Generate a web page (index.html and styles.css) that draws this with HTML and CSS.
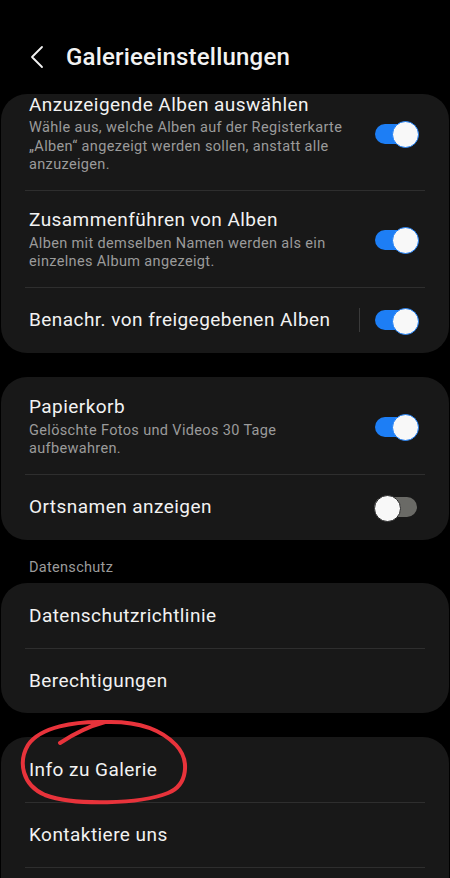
FILE: index.html
```html
<!DOCTYPE html>
<html lang="de">
<head>
  <meta charset="UTF-8"/>
  <meta name="viewport" content="width=device-width, initial-scale=1.0"/>
  <title>Galerieeinstellungen</title>
  <link rel="stylesheet" href="styles.css">
</head>
<body>
<div class="header">
  <svg class="back" width="14" height="24" viewBox="0 0 14 24">
    <path d="M12 2 L2 12 L12 22" fill="none" stroke="#f2f2f2" stroke-width="1.8" stroke-linecap="round" stroke-linejoin="round"/>
  </svg>
  <h1>Galerieeinstellungen</h1>
</div>

<div class="card card_first">
  <div class="row row_sub row_clipped">
    <div class="text">
      <div class="title">Anzuzeigende Alben auswählen</div>
      <div class="sub">Wähle aus, welche Alben auf der Registerkarte „Alben“ angezeigt werden sollen, anstatt alle anzuzeigen.</div>
    </div>
    <span class="switch on"></span>
  </div>
  <div class="row row_sub">
    <div class="text">
      <div class="title">Zusammenführen von Alben</div>
      <div class="sub">Alben mit demselben Namen werden als ein einzelnes Album angezeigt.</div>
    </div>
    <span class="switch on"></span>
  </div>
  <div class="row">
    <div class="text">
      <div class="title">Benachr. von freigegebenen Alben</div>
    </div>
    <span class="vline"></span>
    <span class="switch on"></span>
  </div>
</div>

<div class="card">
  <div class="row row_sub">
    <div class="text">
      <div class="title">Papierkorb</div>
      <div class="sub">Gelöschte Fotos und Videos 30 Tage aufbewahren.</div>
    </div>
    <span class="switch on"></span>
  </div>
  <div class="row">
    <div class="text">
      <div class="title">Ortsnamen anzeigen</div>
    </div>
    <span class="switch"></span>
  </div>
</div>

<div class="label">Datenschutz</div>
<div class="card card_label">
  <div class="row"><div class="title">Datenschutzrichtlinie</div></div>
  <div class="row"><div class="title">Berechtigungen</div></div>
</div>

<div class="card">
  <div class="row"><div class="title">Info zu Galerie</div></div>
  <div class="row"><div class="title">Kontaktiere uns</div></div>
  <div class="row row_empty"></div>
</div>

<!-- Markierung -->
<svg class="mark" width="450" height="878" viewBox="0 0 450 878">
  <path d="M60 743 C 75 733, 90 726, 105 722 C 75 721, 40 727, 28 745 C 18 762, 22 785, 45 795 C 75 806, 140 804, 168 793 C 188 785, 190 760, 176 745 C 160 728, 135 721, 105 722"
        fill="none" stroke="#e8333b" stroke-width="4" stroke-linecap="round" stroke-linejoin="round"/>
</svg>
</body>
</html>
```

FILE: styles.css
```css
* {
    box-sizing: border-box;
}

body {
    margin: 0;
    background-color: #000;
    color: #f2f2f2;
    font-family: Roboto, "Noto Sans", sans-serif;
    position: relative;
    overflow: hidden;
    height: 878px;
}

.header {
    height: 94px;
    padding: 41px 0 0 30px;
    display: flex;
    align-items: flex-start;
}

.back {
    margin-top: 4px;
}

.header h1 {
    margin: 0 0 0 22px;
    font-size: 24px;
    line-height: 32px;
    font-weight: 500;
    letter-spacing: 0.2px;
}

.card {
    background-color: #181818;
    border-radius: 26px;
    margin: 24px 1px 0;
    overflow: hidden;
}

.card_first {
    margin-top: 0;
}

.card_label {
    margin-top: 6px;
}

.row {
    display: flex;
    align-items: center;
    margin: 0 24px;
    padding: 20px 8px 20px 4px;
    border-top: 1px solid #2e2e2e;
}

.row:first-child {
    border-top-color: transparent;
}

.row_sub {
    padding-top: 17px;
    padding-bottom: 15px;
}

.row_clipped {
    margin-top: -19px;
}

.row_clipped .sub {
    margin-top: 2px;
}

.row_empty {
    height: 65px;
}

.text {
    flex: 1;
}

.title {
    font-size: 19px;
    line-height: 24px;
    letter-spacing: 0.45px;
}

.sub {
    margin-top: 3px;
    font-size: 14.5px;
    line-height: 18.5px;
    letter-spacing: 0.35px;
    color: #9b9b9b;
}

.vline {
    width: 1px;
    height: 24px;
    background-color: #3a3a3a;
    margin-right: 14px;
}

.switch {
    position: relative;
    flex: none;
    width: 43px;
    height: 25px;
    margin-left: 28px;
}

.vline + .switch {
    margin-left: 0;
}

.switch::before {
    content: "";
    position: absolute;
    left: 0;
    right: 0;
    top: 2.5px;
    height: 20px;
    border-radius: 10px;
    background-color: #6a6a66;
}

.switch::after {
    content: "";
    position: absolute;
    left: 0;
    top: 0;
    width: 25px;
    height: 25px;
    border-radius: 50%;
    background-color: #f8f8f8;
    border: 1px solid #2a2a2a;
}

.switch.on::before {
    left: 1px;
    right: 1px;
    background-color: #1d7ef5;
}

.switch.on::after {
    left: 18px;
    border: 1.5px solid #1d7ef5;
}

.label {
    margin: 19px 0 0 29px;
    font-size: 14.5px;
    line-height: 18px;
    letter-spacing: 0.3px;
    color: #9b9b9b;
}

.mark {
    position: absolute;
    left: 0;
    top: 0;
    pointer-events: none;
}
```
